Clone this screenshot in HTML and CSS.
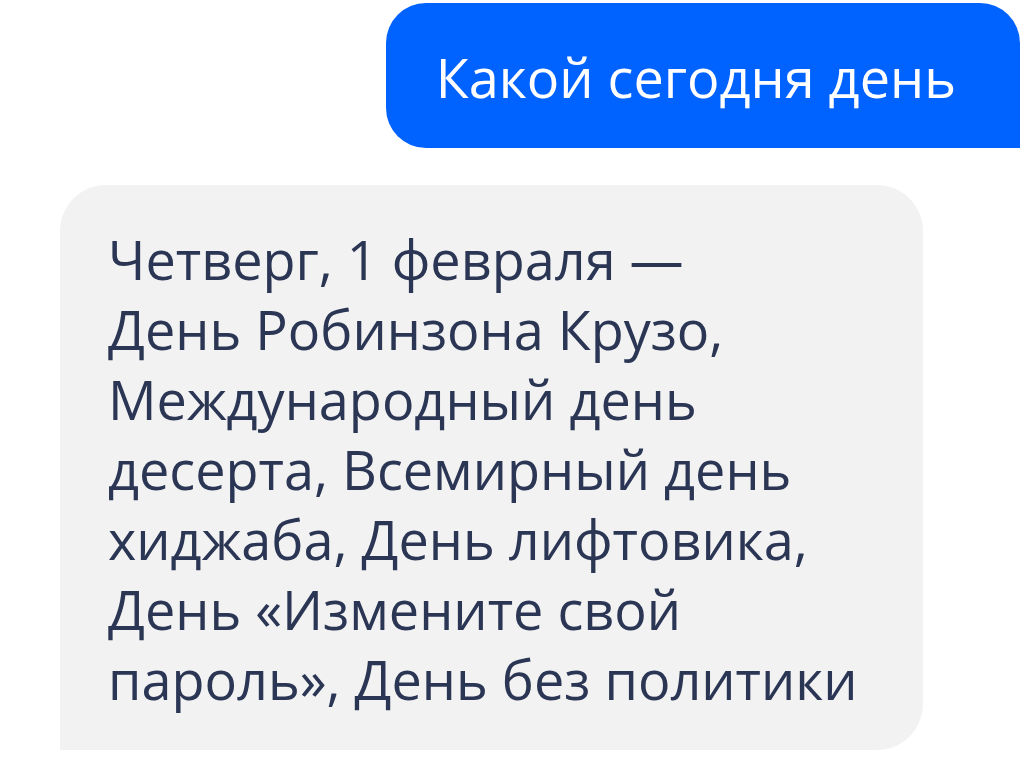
FILE: index.html
```html
<!DOCTYPE html>
<html lang="ru">
<head>
<meta charset="utf-8">
<link rel="stylesheet" href="styles.css">
</head>
<body>
<div class="chat">
  <div class="row row-out">
    <div class="bubble bubble-out">Какой сегодня день</div>
  </div>
  <div class="row row-in">
    <div class="bubble bubble-in">Четверг, 1 февраля —<br>День Робинзона Крузо,<br>Международный день<br>десерта, Всемирный день<br>хиджаба, День лифтовика,<br>День «Измените свой<br>пароль», День без политики</div>
  </div>
</div>
</body>
</html>
```

FILE: styles.css
```css
html, body {
  margin: 0;
  padding: 0;
  background: #ffffff;
}
body {
  font-family: "Open Sans", "Noto Sans", sans-serif;
  width: 1033px;
  height: 767px;
  overflow: hidden;
}
.chat {
  display: flex;
  flex-direction: column;
  padding: 3px 13px 0 60px;
  gap: 37px;
}
.row {
  display: flex;
}
.row-out {
  justify-content: flex-end;
}
.row-in {
  justify-content: flex-start;
}
.bubble {
  font-size: 54px;
  line-height: 70px;
  white-space: nowrap;
}
.bubble-out {
  background: #0062ff;
  color: #ffffff;
  border-radius: 40px 40px 0 40px;
  padding: 39px 64px 36px 50px;
}
.bubble-in {
  background: #f2f2f3;
  color: #2b3654;
  border-radius: 46px 46px 46px 0;
  padding: 39px 62px 36px 48px;
  width: 753px;
}
```
